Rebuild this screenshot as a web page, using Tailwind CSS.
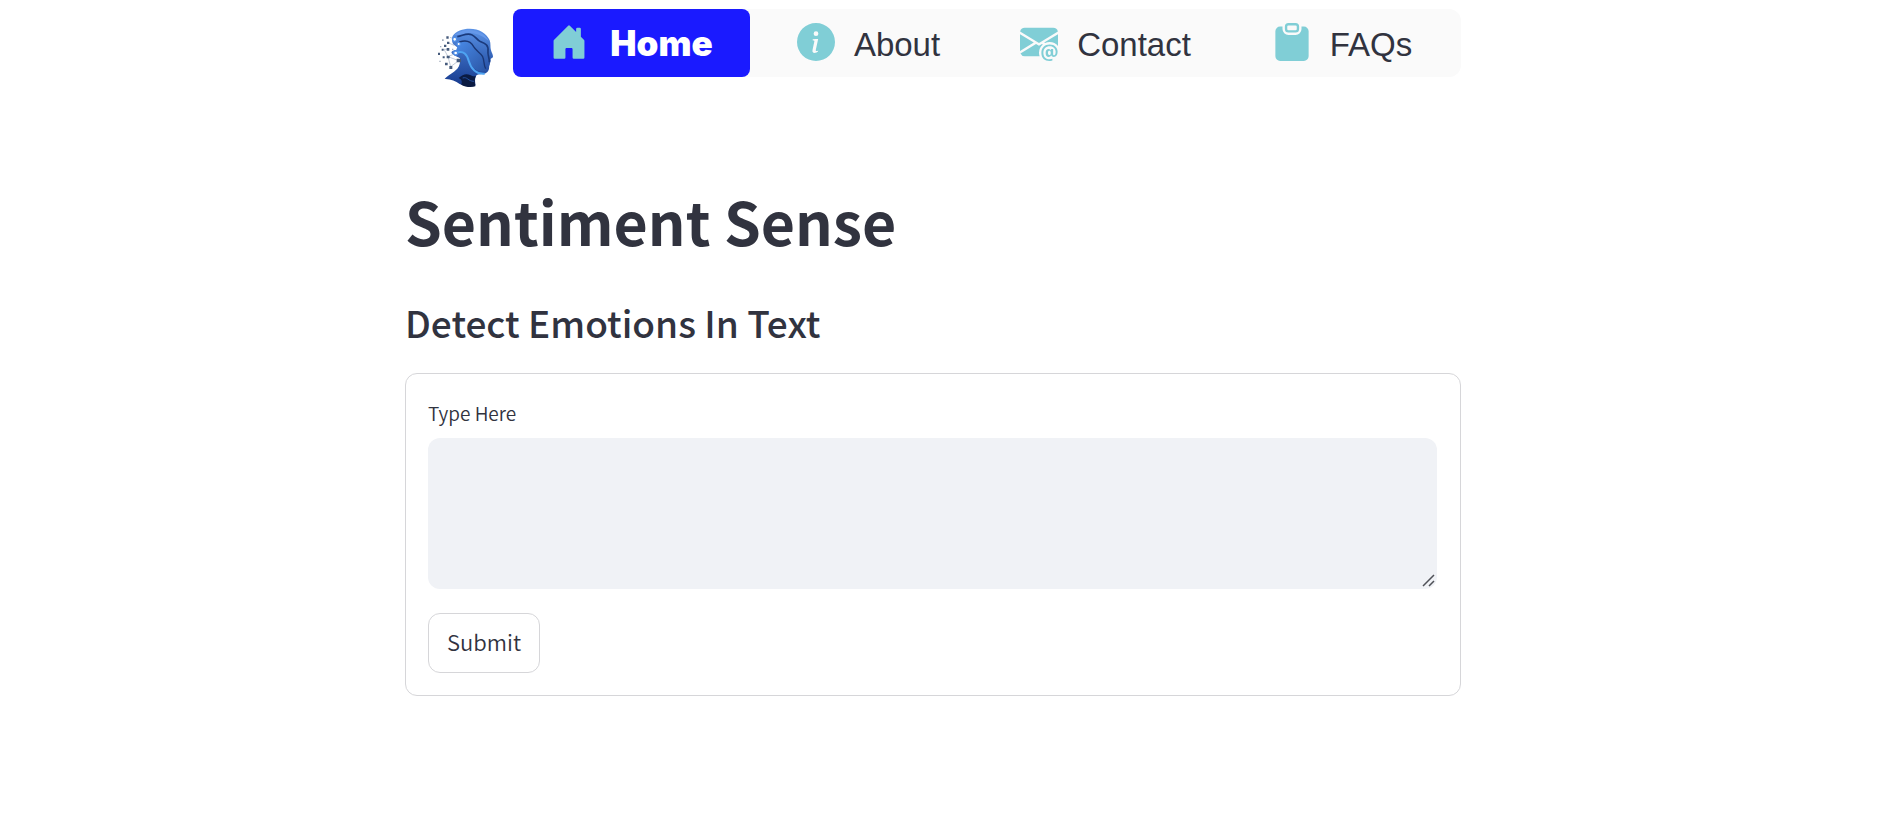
<!DOCTYPE html>
<html lang="en">
<head>
<meta charset="utf-8">
<meta name="viewport" content="width=device-width, initial-scale=1">
<title>Sentiment Sense</title>
<script src="https://cdn.jsdelivr.net/npm/@tailwindcss/browser@4"></script>
</head>
<body class="min-h-screen bg-white pr-[14px] font-['Noto_Sans_CJK_SC',sans-serif] text-[#31333f]">
<div class="mx-auto w-full max-w-[1056px] pt-[9px]">
  <header class="flex items-start">
    <div class="w-[108px] shrink-0 pl-[25px] pt-[11px]">
      <svg class="h-[75px] w-[70px]" viewBox="0 0 210 225" role="img" aria-label="Sentiment Sense logo">
        <defs>
          <linearGradient id="head" x1="0" y1="0" x2="0" y2="1">
            <stop offset="0" stop-color="#5b93e6"/><stop offset=".5" stop-color="#3463b8"/><stop offset="1" stop-color="#16398c"/>
          </linearGradient>
          <linearGradient id="wave" x1="0" y1="0" x2="1" y2="1">
            <stop offset="0" stop-color="#4a8be8"/><stop offset="1" stop-color="#2a55a5"/>
          </linearGradient>
        </defs>
        <path fill="url(#head)" d="M68 48C78 32 98 26 119 26c28 0 52 14 60 35 4 10 1 22 4 30 2 7 6 13 6 19 0 4-6 4-7 7 0 4 1 6-1 9-2 3 0 6-2 9-3 5 0 12-5 19-3 5-10 8-18 8-8 1-16 0-19 8-3 7-2 18 0 26-10 6-34 4-48-4C76 183 62 176 44 177c8-10 28-20 38-31 8-9 9-21 8-31-10-6-22-8-26-18 4-8 16-6 22-9-2-8-14-10-18-18-2-8-4-14 0-22Z"/>
        <path fill="#6598ea" d="M72 46c14-14 42-20 63-14 18 4 33 14 41 30-14-9-20-16-38-20-24-8-42 4-66 4Z"/>
        <path fill="none" stroke="#1b3a7c" stroke-width="5" d="M82 50c16-2 26-12 43-6 13 5 14 16 27 21 14 6 24 10 22 28-2 13 5 20 4 34"/>
        <path fill="url(#wave)" d="M86 69c18-7 33-3 41 12 8 14 20 16 27 28 8 13 5 30 15 44-18 4-34-2-43-16-12-19-19-45-49-42Z"/>
        <path fill="none" stroke="#1a3674" stroke-width="4" d="M88 66c24-8 36 0 43 14 7 13 20 17 27 30 6 13 2 24 9 36"/>
        <path fill="none" stroke="#4ea4f2" stroke-width="6" d="M78 99c24-9 33 6 38 23 7 23 21 41 48 39"/>
        <path fill="#0b1b42" d="M86 174c12-12 24-14 34-9 8 4 11 5 18 3-6 10-3 23-2 31-12 4-32 2-42-5 4-12-1-17-8-20Z"/>
        <path fill="none" stroke="#2350a0" stroke-width="3" d="M98 174c14-5 16 10 34 10"/>
        <path fill="none" stroke="#a5b0c4" stroke-width="2" d="M54 68l18 8M54 88H42M54 110l28-12M54 110l8 30 24-18-32-12M60 52l14 6M42 88l12 22"/>
        <g fill="#fff" stroke="#4f8ee6" stroke-width="4"><circle cx="74" cy="58" r="6"/><circle cx="86" cy="72" r="5"/><circle cx="77" cy="99" r="6"/></g>
        <g fill="#465b7c">
          <path d="M49 49h7v7h-7zM42 74h7v7h-7zM51 65h7v7h-7zM50 84h8v8h-8zM35 86h6v6h-6zM50 107h9v8h-9zM38 109h6v6h-6zM45 128h8v8h-8zM58 138h9v9h-9zM80 116h13v11H80zM24 98h6v7h-6z"/>
          <path opacity=".5" d="M36 58h5v5h-5zM30 78h4v4h-4zM28 122h4v4h-4zM66 86h4v4h-4z"/>
        </g>
      </svg>
    </div>
    <nav class="grid min-w-0 flex-1 grid-cols-4 rounded-xl bg-[#fafafa] font-['Liberation_Sans',Arial,sans-serif] text-[33px] leading-none" aria-label="Main">
      <a href="#home" aria-current="page" class="flex items-end justify-center gap-[22px] rounded-lg bg-[#1a1aff] pb-4 pt-[14px] font-['Arial_Black','Inter',sans-serif] text-[35px] leading-none font-black text-white">
        <svg class="size-[38px] shrink-0 fill-[#80ced6]" viewBox="0 0 16 16" aria-hidden="true"><path d="M6.5 14.5v-3.505c0-.245.25-.495.5-.495h2c.25 0 .5.25.5.5v3.5a.5.5 0 0 0 .5.5h4a.5.5 0 0 0 .5-.5v-7a.5.5 0 0 0-.146-.354L13 5.793V2.5a.5.5 0 0 0-.5-.5h-1a.5.5 0 0 0-.5.5v1.293L8.354 1.146a.5.5 0 0 0-.708 0l-6 6A.5.5 0 0 0 1.5 7.5v7a.5.5 0 0 0 .5.5h4a.5.5 0 0 0 .5-.5"/></svg>
        <span>Home</span>
      </a>
      <a href="#about" class="flex items-end justify-center gap-[19px] rounded-lg pb-4 pt-[14px]">
        <svg class="size-[38px] shrink-0 fill-[#80ced6]" viewBox="0 0 16 16" aria-hidden="true"><path d="M8 16A8 8 0 1 0 8 0a8 8 0 0 0 0 16m.93-9.412-1 4.705c-.07.34.029.533.304.533.194 0 .487-.07.686-.246l-.088.416c-.287.346-.92.598-1.465.598-.703 0-1.002-.422-.808-1.319l.738-3.468c.064-.293.006-.399-.287-.47l-.451-.081.082-.381 2.29-.287zM8 5.5a1 1 0 1 1 0-2 1 1 0 0 1 0 2"/></svg>
        <span>About</span>
      </a>
      <a href="#contact" class="flex items-end justify-center gap-[19px] rounded-lg pb-4 pt-[14px]">
        <svg class="size-[38px] shrink-0 fill-[#80ced6]" viewBox="0 0 16 16" aria-hidden="true"><path d="M2 2A2 2 0 0 0 .05 3.555L8 8.414l7.95-4.859A2 2 0 0 0 14 2zm-2 9.8V4.698l5.803 3.546zm6.761-2.97-6.57 4.026A2 2 0 0 0 2 14h6.256A4.5 4.5 0 0 1 8 12.5a4.49 4.49 0 0 1 1.606-3.446l-.367-.225L8 9.586zM16 9.671V4.697l-5.803 3.546.338.208A4.5 4.5 0 0 1 12.5 8c1.414 0 2.675.652 3.5 1.671"/><path d="M15.834 12.244c0 1.168-.577 2.025-1.587 2.025-.503 0-1.002-.228-1.12-.648h-.043c-.118.416-.543.643-1.015.643-.77 0-1.259-.542-1.259-1.434v-.529c0-.844.481-1.4 1.26-1.4.585 0 .87.333.953.63h.03v-.568h.905v2.19c0 .272.18.42.411.42.315 0 .639-.415.639-1.39v-.118c0-1.277-.95-2.326-2.484-2.326h-.04c-1.582 0-2.64 1.067-2.64 2.724v.157c0 1.867 1.237 2.654 2.57 2.654h.045c.507 0 .935-.07 1.18-.18v.731c-.219.1-.643.175-1.237.175h-.044C10.438 16 9 14.82 9 12.646v-.214C9 10.36 10.421 9 12.485 9h.035c2.12 0 3.314 1.43 3.314 3.034zm-4.04.21v.227c0 .586.227.8.581.8.31 0 .564-.17.564-.743v-.367c0-.516-.275-.708-.572-.708-.346 0-.573.245-.573.791"/></svg>
        <span>Contact</span>
      </a>
      <a href="#faqs" class="flex items-end justify-center gap-[19px] rounded-lg pb-4 pt-[14px]">
        <svg class="size-[38px] shrink-0 fill-[#80ced6]" viewBox="0 0 16 16" aria-hidden="true"><path d="M6.5 0A1.5 1.5 0 0 0 5 1.5v1A1.5 1.5 0 0 0 6.5 4h3A1.5 1.5 0 0 0 11 2.5v-1A1.5 1.5 0 0 0 9.5 0zm3 1a.5.5 0 0 1 .5.5v1a.5.5 0 0 1-.5.5h-3a.5.5 0 0 1-.5-.5v-1a.5.5 0 0 1 .5-.5z"/><path d="M4 1.5H3a2 2 0 0 0-2 2V14a2 2 0 0 0 2 2h10a2 2 0 0 0 2-2V3.5a2 2 0 0 0-2-2h-1v1A2.5 2.5 0 0 1 9.5 5h-3A2.5 2.5 0 0 1 4 2.5z"/></svg>
        <span>FAQs</span>
      </a>
    </nav>
  </header>
  <main>
    <h1 class="mt-[86px] text-[59px] font-bold leading-[80px]">Sentiment Sense</h1>
    <h2 class="mt-[35px] text-[37px] font-medium leading-[52px]">Detect Emotions In Text</h2>
    <form class="mt-[25px] rounded-xl border border-[#d6d6d9] pl-[22px] pr-[23px] pb-[22px] pt-6">
      <label for="entry" class="block text-[19px] font-[350] leading-[30px]">Type Here</label>
      <div class="relative mt-[10px]">
        <textarea id="entry" class="block h-[151px] w-full resize-none rounded-xl bg-[#f0f2f6] p-4 text-xl outline-none"></textarea>
        <svg class="pointer-events-none absolute bottom-0 right-0 size-4" viewBox="0 0 16 16" fill="none" stroke="#4f5157" stroke-width="1.5" aria-hidden="true"><path d="M2 13 13 2M8 13l5-5"/></svg>
      </div>
      <button type="button" class="mt-6 block h-[60px] rounded-xl border border-[#d6d6d9] bg-white px-[18px] pb-1 text-[22px] font-[350] leading-8">Submit</button>
    </form>
  </main>
</div>
</body>
</html>
